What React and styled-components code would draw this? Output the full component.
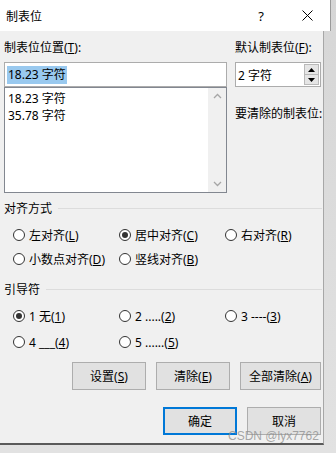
import React from 'react';
import styled, { createGlobalStyle } from 'styled-components';

const GlobalStyle = createGlobalStyle`
  html, body {
    margin: 0;
    padding: 0;
    background: #dcdcdc;
  }
  body {
    font-family: "Noto Sans", "Noto Sans CJK SC", sans-serif;
    font-size: 12px;
    color: #000;
  }
`;

const Page = styled.div`
  position: relative;
  width: 336px;
  height: 453px;
  overflow: hidden;
  background: linear-gradient(#d6d6d6, #e2e2e2);
`;

const TitleBar = styled.div`
  width: 331px;
  height: 31px;
  background: #fff;
  display: flex;
  align-items: center;
  padding-left: 6px;
  box-sizing: border-box;
  border-right: 1px solid #9a9a9a;
`;

const TitleText = styled.span`
  flex: 1;
  font-size: 12px;
`;

const TitleButton = styled.span`
  width: 46px;
  height: 31px;
  display: flex;
  align-items: center;
  justify-content: center;
  font-size: 13px;
`;

const Body = styled.div`
  width: 324px;
  height: 414px;
  box-sizing: border-box;
  background: #f0f0f0;
  border-right: 1px solid #a7a7a7;
  border-bottom: 2px solid #5a5a5a;
  padding: 9px 0 0 4px;
  display: flex;
  flex-direction: column;
`;

const Top = styled.div`
  display: flex;
  gap: 8px;
`;

const LeftCol = styled.div`
  width: 223px;
  display: flex;
  flex-direction: column;
`;

const RightCol = styled.div`
  width: 86px;
  display: flex;
  flex-direction: column;
`;

const Label = styled.div`
  height: 15px;
  line-height: 15px;
  white-space: nowrap;
  margin-top: ${p => p.$mt || 0}px;
`;

const Key = styled.span`
  text-decoration: underline;
  text-underline-offset: 1px;
`;

const TextBox = styled.div`
  margin-top: 7px;
  height: 25px;
  box-sizing: border-box;
  border: 1px solid #acacac;
  background: #fff;
  display: flex;
  align-items: center;
  padding-left: 2px;
`;

const Selected = styled.span`
  background: #99c9ef;
  padding: 1px 1px;
  line-height: 16px;
`;

const ListBox = styled.div`
  height: 106px;
  box-sizing: border-box;
  border: 1px solid #828790;
  background: #fff;
  display: flex;
`;

const ListItems = styled.div`
  flex: 1;
  padding: 2px 0 0 3px;
`;

const ListItem = styled.div`
  height: 17px;
  line-height: 17px;
`;

const ScrollBar = styled.div`
  width: 18px;
  background: #f0f0f0;
  display: flex;
  flex-direction: column;
  justify-content: space-between;
  align-items: center;
  padding: 5px 0;
`;

const SpinBox = styled.div`
  margin-top: 7px;
  height: 25px;
  box-sizing: border-box;
  border: 1px solid #acacac;
  background: #fff;
  display: flex;
  align-items: center;
  padding-left: 2px;
`;

const SpinValue = styled.span`
  flex: 1;
`;

const SpinButtons = styled.div`
  width: 15px;
  height: 21px;
  display: flex;
  flex-direction: column;
  margin-right: 1px;
`;

const SpinBtn = styled.div`
  flex: 1;
  background: #e5e5e5;
  border: 1px solid #b9b9b9;
  display: flex;
  align-items: center;
  justify-content: center;
  & + & {
    border-top: none;
  }
`;

const GroupHeader = styled.div`
  display: flex;
  align-items: center;
  gap: 6px;
  margin-top: ${p => p.$mt}px;
  height: 16px;
  padding-right: 1px;
  &::after {
    content: "";
    flex: 1;
    height: 1px;
    background: #dcdcdc;
  }
`;

const RadioGrid = styled.div`
  display: grid;
  grid-template-columns: 106px 106px 1fr;
  grid-auto-rows: ${p => p.$row}px;
  padding-left: 9px;
  margin-top: ${p => p.$mt}px;
`;

const RadioItem = styled.label`
  display: flex;
  align-items: center;
  gap: 4px;
  white-space: nowrap;
`;

const Circle = styled.span`
  width: 12px;
  height: 12px;
  box-sizing: border-box;
  border: 1px solid #333;
  border-radius: 50%;
  background: #fff;
  display: flex;
  align-items: center;
  justify-content: center;
  &::after {
    content: "";
    width: 6px;
    height: 6px;
    border-radius: 50%;
    background: ${p => (p.$on ? '#333' : 'transparent')};
  }
`;

const ButtonRow = styled.div`
  display: flex;
  justify-content: flex-end;
  gap: 10px;
  padding-right: 2px;
  margin-top: ${p => p.$mt}px;
`;

const Button = styled.div`
  width: ${p => p.$w || 74}px;
  height: 28px;
  box-sizing: border-box;
  background: #e1e1e1;
  border: ${p => (p.$default ? '2px solid #0078d7' : '1px solid #adadad')};
  display: flex;
  align-items: center;
  justify-content: center;
`;

const Watermark = styled.div`
  position: absolute;
  left: 228px;
  top: 429px;
  font-family: "Liberation Sans", sans-serif;
  font-size: 12px;
  line-height: 14px;
  color: rgba(140, 140, 140, 0.75);
`;

const Chevron = ({ up }) => (
  <svg width="9" height="6" viewBox="0 0 9 6">
    <path d={up ? 'M1 5 L4.5 1.5 L8 5' : 'M1 1 L4.5 4.5 L8 1'} fill="none" stroke="#a6a6a6" strokeWidth="1.3" />
  </svg>
);

const Tri = ({ up }) => (
  <svg width="7" height="4" viewBox="0 0 7 4">
    <path d={up ? 'M0 4 L3.5 0 L7 4Z' : 'M0 0 L3.5 4 L7 0Z'} fill="#000" />
  </svg>
);

const Radio = ({ on, children }) => (
  <RadioItem>
    <Circle $on={on} />
    <span>{children}</span>
  </RadioItem>
);

export default function App() {
  return (
    <Page>
      <GlobalStyle />
      <TitleBar>
        <TitleText>制表位</TitleText>
        <TitleButton>?</TitleButton>
        <TitleButton>
          <svg width="11" height="11" viewBox="0 0 11 11">
            <path d="M0.5 0.5 L10.5 10.5 M10.5 0.5 L0.5 10.5" stroke="#000" strokeWidth="1" />
          </svg>
        </TitleButton>
      </TitleBar>
      <Body>
        <Top>
          <LeftCol>
            <Label>制表位位置(<Key>T</Key>):</Label>
            <TextBox>
              <Selected>18.23 字符</Selected>
            </TextBox>
            <ListBox>
              <ListItems>
                <ListItem>18.23 字符</ListItem>
                <ListItem>35.78 字符</ListItem>
              </ListItems>
              <ScrollBar>
                <Chevron up />
                <Chevron />
              </ScrollBar>
            </ListBox>
          </LeftCol>
          <RightCol>
            <Label>默认制表位(<Key>F</Key>):</Label>
            <SpinBox>
              <SpinValue>2 字符</SpinValue>
              <SpinButtons>
                <SpinBtn><Tri up /></SpinBtn>
                <SpinBtn><Tri /></SpinBtn>
              </SpinButtons>
            </SpinBox>
            <Label $mt={19}>要清除的制表位:</Label>
          </RightCol>
        </Top>

        <GroupHeader $mt={7}>对齐方式</GroupHeader>
        <RadioGrid $row={24} $mt={7}>
          <Radio>左对齐(<Key>L</Key>)</Radio>
          <Radio on>居中对齐(<Key>C</Key>)</Radio>
          <Radio>右对齐(<Key>R</Key>)</Radio>
          <Radio>小数点对齐(<Key>D</Key>)</Radio>
          <Radio>竖线对齐(<Key>B</Key>)</Radio>
        </RadioGrid>

        <GroupHeader $mt={10}>引导符</GroupHeader>
        <RadioGrid $row={26} $mt={6}>
          <Radio on>1 无(<Key>1</Key>)</Radio>
          <Radio>2 .....(<Key>2</Key>)</Radio>
          <Radio>3 ----(<Key>3</Key>)</Radio>
          <Radio>4 ___(<Key>4</Key>)</Radio>
          <Radio>5 ......(<Key>5</Key>)</Radio>
        </RadioGrid>

        <ButtonRow $mt={7}>
          <Button>设置(<Key>S</Key>)</Button>
          <Button>清除(<Key>E</Key>)</Button>
          <Button $w={81}>全部清除(<Key>A</Key>)</Button>
        </ButtonRow>
        <ButtonRow $mt={17}>
          <Button $default>确定</Button>
          <Button>取消</Button>
        </ButtonRow>
      </Body>
      <Watermark>CSDN @lyx7762</Watermark>
    </Page>
  );
}
